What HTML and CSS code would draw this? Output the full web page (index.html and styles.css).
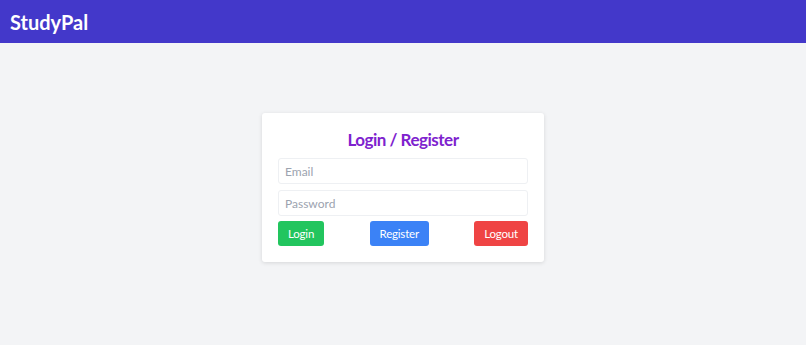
FILE: index.html
```html
<!DOCTYPE html>
<html lang="en">
<head>
    <meta charset="UTF-8">
    <meta name="viewport" content="width=device-width, initial-scale=1.0">
    <title>StudyPal</title>
    <link rel="stylesheet" href="styles.css">
</head>
<body>
    <header class="topbar">
        <h1>StudyPal</h1>
    </header>
    <main class="page">
        <div class="auth-card">
            <h2>Login / Register</h2>
            <form class="auth-form" onsubmit="return false">
                <input type="email" placeholder="Email">
                <input type="password" placeholder="Password">
                <div class="actions">
                    <button type="button" class="btn btn-green">Login</button>
                    <button type="button" class="btn btn-blue">Register</button>
                    <button type="button" class="btn btn-red">Logout</button>
                </div>
            </form>
        </div>
    </main>
</body>
</html>
```

FILE: styles.css
```css
body {
    font-family: Lato, "Noto Sans", sans-serif;
    margin: 0;
    padding: 0;
    background-color: #f3f4f6;
    height: 345px;
}

.topbar {
    background-color: #4338ca;
    color: white;
    height: 43px;
    padding: 0 10px;
    display: flex;
    align-items: center;
}

.topbar h1 {
    margin: 0;
    font-size: 20px;
    font-weight: 700;
}

.page {
    padding-top: 70px;
}

.auth-card {
    width: 250px;
    margin: 0 auto;
    background: white;
    padding: 16px;
    border-radius: 3px;
    box-shadow: 0 1px 4px rgba(0, 0, 0, 0.12);
}

.auth-card h2 {
    margin: 0 0 7px;
    text-align: center;
    color: #7e22ce;
    font-size: 17px;
    font-weight: 700;
    line-height: 22px;
    letter-spacing: -0.5px;
}

.auth-form {
    display: flex;
    flex-direction: column;
    gap: 6px;
}

.auth-form input {
    height: 26px;
    box-sizing: border-box;
    padding: 0 6px;
    font-family: inherit;
    font-size: 12px;
    border: 1px solid #eef0f3;
    border-radius: 3px;
    outline: none;
}

.auth-form input::placeholder {
    color: #9ca3af;
}

.actions {
    display: flex;
    justify-content: space-between;
    margin-top: -1px;
}

.btn {
    height: 25px;
    padding: 0 10px;
    font-family: inherit;
    font-size: 11.5px;
    letter-spacing: -0.2px;
    color: white;
    border: none;
    border-radius: 3px;
    cursor: pointer;
}

.btn-green {
    background-color: #22c55e;
}

.btn-blue {
    background-color: #3b82f6;
}

.btn-red {
    background-color: #ef4444;
}
```
